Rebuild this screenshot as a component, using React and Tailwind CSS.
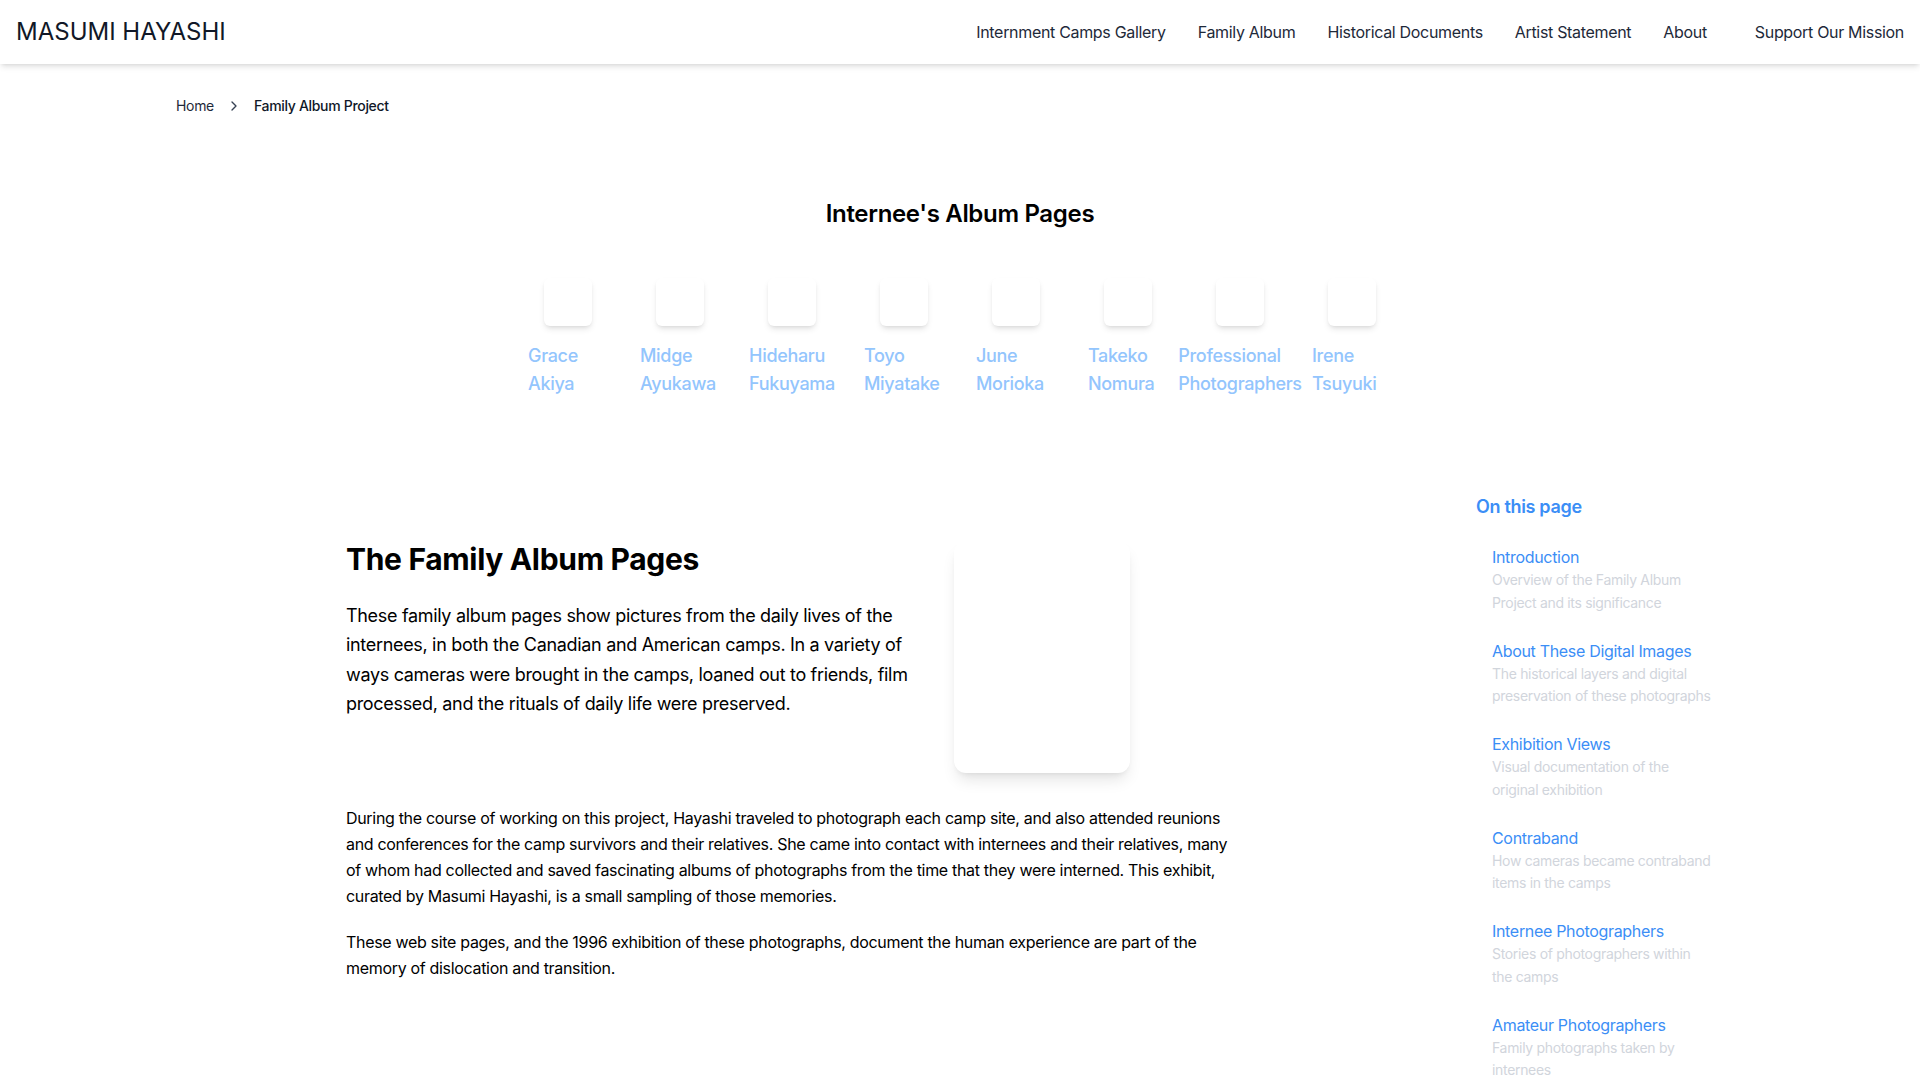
import { ChevronRight } from "lucide-react";

const navLinks = [
  "Internment Camps Gallery",
  "Family Album",
  "Historical Documents",
  "Artist Statement",
  "About",
];

const internees = [
  "Grace Akiya",
  "Midge Ayukawa",
  "Hideharu Fukuyama",
  "Toyo Miyatake",
  "June Morioka",
  "Takeko Nomura",
  "Professional Photographers",
  "Irene Tsuyuki",
];

const sections = [
  {
    title: "Introduction",
    desc: "Overview of the Family Album Project and its significance",
  },
  {
    title: "About These Digital Images",
    desc: "The historical layers and digital preservation of these photographs",
  },
  {
    title: "Exhibition Views",
    desc: "Visual documentation of the original exhibition",
  },
  {
    title: "Contraband",
    desc: "How cameras became contraband items in the camps",
  },
  {
    title: "Internee Photographers",
    desc: "Stories of photographers within the camps",
  },
  {
    title: "Amateur Photographers",
    desc: "Family photographs taken by internees",
  },
];

export default function App() {
  return (
    <div className="min-h-screen bg-white font-['Inter','Liberation_Sans',sans-serif] tracking-[-0.02em] text-gray-900 antialiased">
      {/* top bar */}
      <header className="relative z-10 flex h-16 items-center justify-between bg-white px-4 shadow-md">
        <a href="#" className="text-2xl font-normal tracking-normal text-[#111827]">
          MASUMI HAYASHI
        </a>
        <nav className="flex items-center gap-8 text-base text-gray-800">
          {navLinks.map((l) => (
            <a key={l} href="#" className="hover:text-blue-600">
              {l}
            </a>
          ))}
          <a href="#" className="ml-4 hover:text-blue-600">
            Support Our Mission
          </a>
        </nav>
      </header>

      {/* breadcrumb */}
      <div className="px-[176px] pt-8">
        <ol className="flex items-center gap-3 text-sm text-gray-800">
          <li>
            <a href="#">Home</a>
          </li>
          <li className="flex items-center">
            <ChevronRight className="h-4 w-4 text-gray-700" strokeWidth={2} />
          </li>
          <li className="font-medium text-gray-900">Family Album Project</li>
        </ol>
      </div>

      {/* album pages */}
      <section className="mt-[82px] flex flex-col items-center">
        <h2 className="text-2xl font-semibold text-black">
          Internee's Album Pages
        </h2>
        <div className="mt-12 flex gap-8">
          {internees.map((name) => (
            <a key={name} href="#" className="flex w-20 flex-col items-center">
              <div className="h-12 w-12 rounded-md bg-white shadow-md" />
              <span className="mt-4 text-lg font-medium leading-7 text-[#93c5fd]">
                {name}
              </span>
            </a>
          ))}
        </div>
      </section>

      {/* body + sidebar */}
      <div className="mt-[95px] flex">
        <main className="flex-1 pl-[346px] pt-12">
          <div className="flex items-start gap-9">
            <div className="w-[572px]">
              <h1 className="text-3xl font-bold text-black">
                The Family Album Pages
              </h1>
              <p className="mt-6 text-lg leading-relaxed text-black">
                These family album pages show pictures from the daily lives of
                the internees, in both the Canadian and American camps. In a
                variety of ways cameras were brought in the camps, loaned out to
                friends, film processed, and the rituals of daily life were
                preserved.
              </p>
            </div>
            <div className="h-[232px] w-44 rounded-xl bg-white shadow-lg" />
          </div>

          <div className="mt-8 w-[896px] text-base leading-relaxed text-black">
            <p className="mb-5">
              During the course of working on this project, Hayashi traveled to
              photograph each camp site, and also attended reunions and
              conferences for the camp survivors and their relatives. She came
              into contact with internees and their relatives, many of whom had
              collected and saved fascinating albums of photographs from the
              time that they were interned. This exhibit, curated by Masumi
              Hayashi, is a small sampling of those memories.
            </p>
            <p>
              These web site pages, and the 1996 exhibition of these
              photographs, document the human experience are part of the memory
              of dislocation and transition.
            </p>
          </div>
        </main>

        <aside className="mr-[207px] w-[237px] shrink-0">
          <h3 className="mb-6 text-lg font-semibold text-[#3b8ef6]">
            On this page
          </h3>
          <ul className="space-y-6 pl-4">
            {sections.map((s) => (
              <li key={s.title}>
                <a href="#" className="block text-base text-[#3b8ef6]">
                  {s.title}
                </a>
                <p className="text-sm leading-relaxed text-gray-300">{s.desc}</p>
              </li>
            ))}
          </ul>
        </aside>
      </div>
    </div>
  );
}
